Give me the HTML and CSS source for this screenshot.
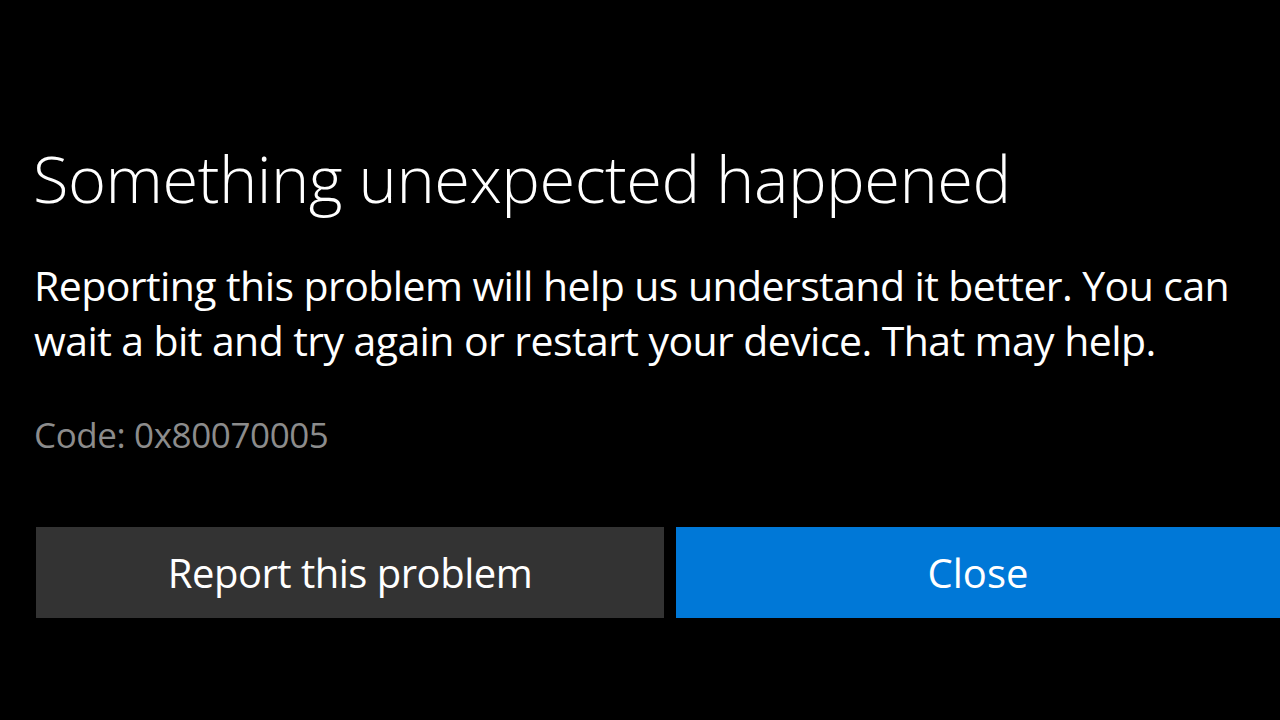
FILE: index.html
```html
<!DOCTYPE html>
<html lang="en">
<head>
<meta charset="utf-8">
<title>Something unexpected happened</title>
<link rel="stylesheet" href="styles.css">
</head>
<body>
<main class="dialog">
  <h1 class="title">Something unexpected happened</h1>
  <p class="message">Reporting this problem will help us understand it better. You can wait a bit and try again or restart your device. That may help.</p>
  <p class="code">Code: 0x80070005</p>
  <div class="actions">
    <button class="btn btn-secondary" type="button">Report this problem</button>
    <button class="btn btn-primary" type="button">Close</button>
  </div>
</main>
</body>
</html>
```
FILE: styles.css
```css
html, body {
  margin: 0;
  padding: 0;
  background: #000;
  width: 1280px;
  height: 720px;
  overflow: hidden;
}
body {
  font-family: "Open Sans", "Noto Sans", "Liberation Sans", sans-serif;
  color: #fff;
}
.dialog {
  display: flex;
  flex-direction: column;
  padding: 138px 0 0 36px;
}
.title {
  margin: 0;
  font-size: 65px;
  font-weight: 300;
  line-height: 80px;
  letter-spacing: -0.5px;
  margin-left: -3px;
}
.message {
  margin: 40px 0 0 -2px;
  font-size: 41px;
  font-weight: 400;
  line-height: 55px;
  width: 1210px;
  letter-spacing: -0.58px;
}
.code {
  margin: 45px 0 0 -2px;
  font-size: 35px;
  line-height: 44px;
  color: #8c8c8c;
  letter-spacing: -0.4px;
}
.actions {
  display: flex;
  gap: 12px;
  margin-top: 70px;
}
.btn {
  border: 0;
  margin: 0;
  padding: 0;
  height: 91px;
  font-family: inherit;
  font-size: 40px;
  color: #fff;
  letter-spacing: -0.5px;
}
.btn-secondary {
  width: 628px;
  background: #333333;
}
.btn-primary {
  flex: 1;
  background: #0078d7;
  letter-spacing: 0;
}
```
